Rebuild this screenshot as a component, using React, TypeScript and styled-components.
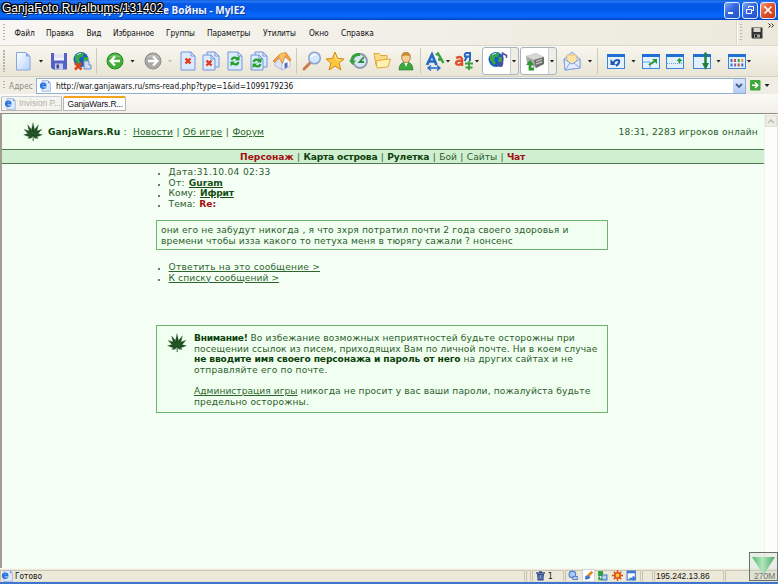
import React from 'react';
import styled, { createGlobalStyle, css } from 'styled-components';

const Global = createGlobalStyle`
  html, body, #root { margin: 0; padding: 0; height: 100%; overflow: hidden; }
  body { width: 778px; height: 584px; background: #ece9d8; }
  * { box-sizing: border-box; }
  svg { display: block; flex: none; overflow: visible; }
`;

const tahoma = css`
  font-family: 'DejaVu Sans Condensed', 'DejaVu Sans', sans-serif;
  font-size: 8.3px;
  color: #111;
`;

const Window = styled.div`
  position: relative;
  width: 778px;
  height: 584px;
  display: flex;
  flex-direction: column;
  overflow: hidden;
  white-space: nowrap;
`;

/* ---------- title bar ---------- */
const TitleBar = styled.header`
  height: 20px;
  flex: none;
  display: flex;
  align-items: center;
  justify-content: space-between;
  padding-right: 2px;
  background: linear-gradient(#0a50cc 0, #2a7cf8 1px, #0458e4 4px, #0358e8 9px, #0566fb 14px, #0565f8 17px, #0340b8 20px);
`;
const Title = styled.div`
  width: 245px;
  display: flex;
  justify-content: flex-end;
  font: bold 10px/18px 'Open Sans', sans-serif;
  color: #f2f6ff;
  text-shadow: 1px 1px 0 #0a3a9a;
`;
const Stamp = styled.div`
  position: absolute;
  left: 2px;
  top: 1px;
  font: 12px/14px 'Liberation Sans', sans-serif;
  letter-spacing: 0.04px;
  color: #fff;
  text-shadow: -1px -1px 0 #000, 1px -1px 0 #000, -1px 1px 0 #000, 1px 1px 0 #000, 0 -1px 0 #000, 0 1px 0 #000,
    -1px 0 0 #000, 1px 0 0 #000, 0 0 2px #000;
`;
const Controls = styled.div`
  display: flex;
  gap: 2px;
`;
const Control = styled.button<{ $close?: boolean }>`
  width: 16px;
  height: 17px;
  padding: 0;
  display: grid;
  place-items: center;
  border: 1px solid #dfe8fa;
  border-radius: 3px;
  background: ${p =>
    p.$close ? 'linear-gradient(135deg, #f0a080, #e2542c 45%, #c83a10)' : 'linear-gradient(135deg, #7fa8f6, #3468e0 45%, #2450c8)'};
`;

/* ---------- menu ---------- */
const Grip = styled.div`
  width: 2px;
  align-self: stretch;
  margin: 4px 0;
  background: repeating-linear-gradient(#b9b5a6 0 1.5px, transparent 1.5px 3px);
`;
const MenuBar = styled.nav`
  ${tahoma}
  height: 26px;
  flex: none;
  display: flex;
  align-items: stretch;
  padding-left: 3px;
  background: linear-gradient(90deg, #f7f6f2, #ece9dc);
  border-bottom: 1px solid #dcd9cc;
`;
const MenuItems = styled.div`
  flex: 1;
  display: flex;
  align-items: center;
  gap: 12px;
  padding: 1px 0 0 9.5px;
`;
const MenuItem = styled.span<{ $w: number; $ls?: number }>`
  width: ${p => p.$w}px;
  letter-spacing: ${p => p.$ls ?? -0.1}px;
`;
const MenuExtra = styled.div`
  width: 41px;
  display: flex;
  align-items: center;
  border-left: 1px solid #fff;
  box-shadow: -1px 0 0 #dad7c8;
  padding-left: 2px;
`;
const ExtraIcon = styled.div`
  margin: 1px 0 0 9px;
`;
const Chevron = styled.div`
  margin: -14px 0 0 5px;
`;

/* ---------- tool bar ---------- */
const ToolBar = styled.div`
  height: 31px;
  flex: none;
  display: flex;
  align-items: center;
  padding-left: 3px;
  background: linear-gradient(#f8f6ef, #efecdf 60%, #e9e5d6);
  border-bottom: 1px solid #d5d1c0;
`;
const Tool = styled.div<{ $m?: number }>`
  width: 20px;
  height: 20px;
  flex: none;
  margin-left: ${p => p.$m ?? 4}px;
`;
const Arrow = styled.i<{ $m?: number; $dim?: boolean }>`
  flex: none;
  width: 5px;
  height: 3px;
  margin: 0 0.5px 0 ${p => (p.$m ?? 5) + 0.5}px;
  background: ${p => (p.$dim ? '#c4c0b4' : '#222')};
  clip-path: polygon(0 0, 100% 0, 50% 100%);
`;
const Sep = styled.i`
  flex: none;
  width: 1px;
  height: 26px;
  margin-left: 4px;
  background: #cdcabc;
`;
const Split = styled.div<{ $m: number }>`
  width: 37px;
  height: 28px;
  flex: none;
  margin-left: ${p => p.$m}px;
  display: flex;
  align-items: center;
  border: 1px solid #a9b4be;
  border-radius: 3px;
  background: linear-gradient(90deg, #fff 0 27px, #c9cdd0 27px 28px, #eeede6 28px);
`;

/* ---------- address ---------- */
const AddressBar = styled.div`
  ${tahoma}
  height: 17px;
  flex: none;
  display: flex;
  align-items: center;
  padding-left: 3px;
  background: #f0eee4;
`;
const Label = styled.span`
  width: 27px;
  margin-left: 4px;
  color: #8f8c80;
  letter-spacing: 0.05px;
`;
const Field = styled.div`
  width: 710px;
  height: 16px;
  display: flex;
  align-items: center;
  padding-left: 2px;
  border: 1px solid #8fb0cd;
  background: #fff;
`;
const Url = styled.span`
  flex: 1;
  margin-left: 5px;
  letter-spacing: -0.02px;
`;
const Drop = styled.div`
  width: 12px;
  height: 14px;
  display: grid;
  place-items: center;
  background: linear-gradient(#dbe6fd, #b6cbf6);
`;
const Go = styled.div`
  margin-left: 4px;
`;

/* ---------- tabs ---------- */
const TabBar = styled.div`
  height: 19px;
  flex: none;
  display: flex;
  padding: 2px 0 1px 1px;
  background: linear-gradient(#fbfaf7, #f1efe7);
`;
const Tab = styled.div<{ $active?: boolean }>`
  display: flex;
  align-items: center;
  width: ${p => (p.$active ? 63 : 61)}px;
  height: 15px;
  margin-right: 1px;
  padding-left: ${p => (p.$active ? 3.5 : 2)}px;
  gap: 3px;
  border: 1px solid #b4b8b4;
  border-top: ${p => (p.$active ? '2px solid #f2a21c' : '1px solid #c9cfd6')};
  border-radius: 2px 2px 0 0;
  background: ${p => (p.$active ? '#fff' : '#f4f3ee')};
  color: ${p => (p.$active ? '#111' : '#b3b1a8')};
  font: 8.4px/11px 'Liberation Sans', sans-serif;
  letter-spacing: ${p => (p.$active ? -0.1 : -0.02)}px;
`;

/* ---------- page ---------- */
const Viewport = styled.div`
  flex: 1;
  display: flex;
  border-top: 1px solid #8f8a80;
  border-left: 2px solid #a19b90;
  border-right: 1px solid #e4e2d8;
  background: #f5fff5;
`;
const Page = styled.main`
  width: 762px;
  font: 9.12px/10.64px 'DejaVu Sans', Verdana, sans-serif;
  color: #2d5c2d;
`;
const Scroll = styled.div`
  flex: 1;
  background: #fdfefc;
  border-left: 1px solid #f0f2ec;
`;
const ScrollButton = styled.div`
  height: 12px;
  margin: 1px 0 0;
  display: grid;
  place-items: center;
  background: #efeee6;
  border: 1px solid #e0dfd6;
`;
const Run = styled.span<{ $ls?: number }>`
  letter-spacing: ${p => p.$ls ?? 0}px;
`;
const Strong = styled.b<{ $ls?: number; $red?: boolean }>`
  letter-spacing: ${p => p.$ls ?? 0}px;
  color: ${p => (p.$red ? '#a01010' : '#0c400c')};
`;
const Link = styled.a<{ $ls?: number; $bold?: boolean }>`
  letter-spacing: ${p => p.$ls ?? 0}px;
  font-weight: ${p => (p.$bold ? 'bold' : 'normal')};
  color: ${p => (p.$bold ? '#145014' : '#2d662d')};
  text-decoration: underline;
  text-decoration-thickness: 1px;
  text-underline-offset: 1px;
`;
const SiteHead = styled.div`
  height: 35px;
  display: flex;
  align-items: center;
  padding: 1px 6px 0 21px;
  background: #f0fff0;
`;
const Brand = styled.div`
  flex: 1;
  display: flex;
  align-items: center;
`;
const BrandName = styled.div`
  margin: 0 0 0 5px;
  display: flex;
  width: 80px;
  gap: 3.5px;
`;
const HeadLinks = styled.div`
  display: flex;
  gap: 3.5px;
  margin-left: 5px;
`;
const SiteNav = styled.div`
  height: 15px;
  display: flex;
  justify-content: center;
  align-items: center;
  gap: 3.4px;
  background: #d0eed0;
  border-top: 1px solid #4c7c4c;
  border-bottom: 1px solid #4c7c4c;
  padding: 1px 1px 0 0;
`;
const Column = styled.div`
  width: 452px;
  margin-left: 154px;
  padding-top: 3px;
`;
const List = styled.ul`
  margin: 0;
  padding: 0;
  list-style: none;
`;
const Item = styled.li`
  height: 10.64px;
  display: flex;
  align-items: center;
  gap: 4px;
  &::before {
    content: '';
    width: 2px;
    height: 2px;
    margin: 4px 5px 0 1.6px;
    border-radius: 1px;
    background: #2d5c2d;
  }
`;
const Box = styled.section`
  border: 1px solid #6cb56c;
  background: #f0fff0;
`;
const Message = styled(Box)`
  height: 30px;
  margin: 10.4px 0 12px;
  padding: 4px 4px;
`;
const Warning = styled(Box)`
  height: 88px;
  margin-top: 42px;
  padding: 7px 0 0 10px;
  display: flex;
  gap: 7px;
`;
const Line = styled.div`
  height: 10.64px;
`;

/* ---------- status bar ---------- */
const StatusBar = styled.footer`
  ${tahoma}
  height: 16px;
  flex: none;
  display: flex;
  align-items: center;
  background: #ece9d8;
  border-top: 1px solid #f8f7f0;
  border-bottom: 2px solid #3f74cf;
`;
const Cell = styled.div<{ $w: number; $pad?: number; $gap?: number }>`
  width: ${p => p.$w}px;
  height: 12px;
  flex: none;
  display: flex;
  align-items: center;
  gap: ${p => p.$gap ?? 2}px;
  padding-left: ${p => p.$pad ?? 2}px;
  border: 1px solid #cbc7b6;
  border-left-color: #c5c1b0;
  border-bottom-color: #e3dfcf;
  margin-right: 1px;
`;
const Address = styled.span`
  font: 8.4px/10px 'Liberation Sans', sans-serif;
`;
const Memory = styled.span`
  font: 8.8px/10px 'Liberation Sans', sans-serif;
  letter-spacing: -0.25px;
  color: #333;
`;
const Counter = styled.div`
  position: absolute;
  left: 749px;
  top: 552px;
  width: 29px;
  height: 29px;
  border: 1px solid #6a6f68;
  background: rgba(205, 215, 203, 0.4);
`;

/* ---------- drawings ---------- */
const Leaf = ({ s }: { s: number }) => (
  <svg width={s} height={s} viewBox="-10 -10 20 20">
    <g fill="#1f4f22" stroke="#1f4f22" strokeWidth=".2">
      {[[0, 13], [-27, 12], [27, 12], [-55, 11], [55, 11], [-85, 9.5], [85, 9.5], [-120, 6], [120, 6]].map(([a, l]) => (
        <path key={a} transform={`translate(0 3.500) rotate(${a})`} d={`M0 .8 L-.5 -1 L-1.5 ${-l * 0.5} L-.8 ${-l * 0.72} L0 ${-l} L.8 ${-l * 0.72} L1.500 ${-l * 0.5} L.5 -1Z`} />
      ))}
      <path d="M-.4 3h.8L.5 9h-.6Z" />
    </g>
  </svg>
);
const Sheet = ({ x = 3, y = 1, w = 14, h = 18 }) => (
  <path d={`M${x} ${y}H${x + w - 4}L${x + w} ${y + 4}V${y + h}H${x}Z M${x + w - 4} ${y}v4h4`} fill="#dceafd" stroke="#7495dc" />
);
const Ic = ({ children, s = 20 }: { children: React.ReactNode; s?: number }) => (
  <svg width={s} height={s} viewBox="0 0 20 20">{children}</svg>
);
const Globe = () => (
  <g>
    <circle cx="9" cy="8.500" r="7.500" fill="#1b5cc0" />
    <path d="M3 5Q7 0 12 2L11 6L8 6L7 9L9 12L7 14L3 9ZM12 6L16 6Q17 10 14 13L11 10Z" fill="#36a844" />
    <path d="M5 4Q7 2 9 2.500" stroke="#b9e2ff" fill="none" />
  </g>
);
const Cross = ({ x = 10, y = 10 }) => (
  <path d={`M${x - 2.5} ${y - 2.5}l5 5m0-5l-5 5`} stroke="#e03a16" strokeWidth="2.400" />
);
const Cycle = ({ x = 10 }) => (
  <g fill="none" stroke="#25a02c" strokeWidth="2.200">
    <path d={`M${x - 3.5} 9Q${x - 2} 5 ${x + 2.5} 7.500M${x + 3.5} 11Q${x + 2} 15 ${x - 2.5} 12.500`} />
    <path d={`M${x} 9.500h4.500v-5ZM${x} 10.500h-4.500v5Z`} fill="#25a02c" stroke="none" />
  </g>
);
const Frame = () => (
  <g>
    <rect x="1.500" y="3.500" width="17" height="14" fill="#e4f1fd" stroke="#3d85d8" />
    <rect x="1" y="3" width="18" height="3" fill="#1f6fd4" />
  </g>
);
const NewDoc = () => (
  <Ic>
    <defs>
      <linearGradient id="sheet" x2="1" y2="1">
        <stop stopColor="#fff" />
        <stop offset="1" stopColor="#b5d2fa" />
      </linearGradient>
    </defs>
    <path d="M3.500 1.500H13L17 5.500V19H3.500Z" fill="url(#sheet)" stroke="#86a5e0" />
    <path d="M13 1.500v4h4Z" fill="#7ea5ea" />
  </Ic>
);
const Save = () => (
  <Ic>
    <path d="M2 2H18V18.500H4L2 16.500Z" fill="#5462c4" />
    <path d="M5 2h10v7.500H5Z" fill="#f1f2fa" />
    <path d="M5 4h10M5 6h10" stroke="#c6cae6" strokeWidth=".7" />
    <path d="M6 12.500h8v6H6Z" fill="#c9cdec" />
    <path d="M7.500 13.500h2.500v4H7.500Z" fill="#3a4596" />
  </Ic>
);
const GlobeOff = () => (
  <Ic>
    <Globe />
    <path d="M12 10h5v4h2v4h-7v-3Z" fill="#cdddf6" stroke="#6f8dc4" />
    <path d="M3 12l6.500 6.500m0-6.500l-6.500 6.500" stroke="#e0401a" strokeWidth="2.500" />
  </Ic>
);
const Round = ({ fill, edge, flip }: { fill: string; edge: string; flip?: boolean }) => (
  <Ic>
    <circle cx="10" cy="10" r="8" fill={fill} stroke={edge} />
    <path d="M3 7Q10 0 17 7Q10 5 3 7Z" fill="#fff" opacity=".3" />
    <path transform={flip ? 'translate(20 0) scale(-1 1)' : undefined} d="M15 10H6M10 5.500L5.500 10L10 14.500" fill="none" stroke="#fff" strokeWidth="2.300" />
  </Ic>
);
const Stop = () => <Ic><Sheet /><Cross /></Ic>;
const StopAll = () => <Ic><Sheet x={6} y={1} w={12} h={15} /><Sheet x={2} y={4} w={12} h={15} /><Cross x={8} y={12} /></Ic>;
const Refresh = () => <Ic><Sheet /><Cycle /></Ic>;
const RefreshAll = () => <Ic><Sheet x={6} y={1} w={12} h={15} /><Sheet x={2} y={4} w={12} h={15} /><g transform="translate(0 2)"><Cycle x={8} /></g></Ic>;
const Home = () => (
  <Ic>
    <path d="M3 10L7 6L11 11V19L3 15Z" fill="#dfe3f6" stroke="#a2a8d4" strokeWidth=".7" />
    <path d="M10 12L13 6L18 9V15.500L10 19Z" fill="#f8f8fd" stroke="#a2a8d4" strokeWidth=".7" />
    <path d="M12.500 12.500l3-1.200v5l-3 1.300Z" fill="#4c6ec0" />
    <path d="M1 10L8 3L14 1.500L19 9L17.500 10L13 5L10.500 12.500L7.500 7L2.500 11.500Z" fill="#f3a640" stroke="#cf7620" strokeWidth=".7" />
    <path d="M8 3L13.500 2L13 5L10.500 11L7.500 6.500Z" fill="#f9c064" />
  </Ic>
);
const Search = () => (
  <Ic>
    <path d="M2 18L8 12" stroke="#c97b4a" strokeWidth="3" strokeLinecap="round" />
    <circle cx="12.500" cy="7" r="5.800" fill="#d3e9fd" stroke="#8fa3cf" strokeWidth="1.500" />
    <path d="M9 6Q11 3 14 4" stroke="#fff" strokeWidth="1.500" fill="none" />
  </Ic>
);
const Star = () => (
  <Ic>
    <path d="M10 1L12.600 7.300L19 8L14 12L16 19L10 15L4 19L6 12L1 8L7.400 7.300Z" fill="#fcc83c" stroke="#d98a1c" />
    <path d="M10 4L11.500 8.500L15 9" stroke="#fff0a8" fill="none" />
  </Ic>
);
const History = () => (
  <Ic>
    <circle cx="11" cy="10" r="7" fill="#d8e6f2" stroke="#8c99ae" strokeWidth="1.800" />
    <path d="M2.500 10Q3.500 3 11 3.500" fill="none" stroke="#35a03c" strokeWidth="3" />
    <path d="M0 9.500H7L3.500 14Z" fill="#35a03c" />
    <path d="M15 6L10.500 11H15" fill="none" stroke="#2c8b38" strokeWidth="1.800" />
  </Ic>
);
const Folder = () => (
  <Ic>
    <path d="M2 2.500h5l1.500 2H15v8L4 14Z" fill="#fbdc84" stroke="#e0a83c" />
    <path d="M5 17L4 10L12 8.500L18.500 8L16 16Z" fill="#fff0b0" stroke="#e0a83c" />
  </Ic>
);
const Person = () => (
  <Ic>
    <path d="M3 19Q3 11 10 11Q17 11 17 19Z" fill="#3aa83c" stroke="#1f7a2a" strokeWidth=".6" />
    <path d="M8 11h4l-2 5Z" fill="#fff" />
    <ellipse cx="10" cy="6.500" rx="4.300" ry="5" fill="#f6cf98" stroke="#b97a3c" />
    <path d="M5.500 5.500Q5.500 1 10 1Q14.500 1 14.500 5.500Q10 3.500 5.500 5.500Z" fill="#c98a38" />
  </Ic>
);
const Fonts = () => (
  <Ic>
    <path d="M11 4L13 2.500L18.500 12M13 8.500h4" stroke="#36a044" strokeWidth="2.400" fill="none" />
    <path d="M2 14L7 3.500L11.500 14M4 10.500h6" stroke="#2468c8" strokeWidth="2.700" fill="none" />
    <path d="M3 17h12M6 14.500L3 17L6 19.500M12 14.500L15 17L12 19.500" stroke="#2468c8" strokeWidth="1.300" fill="none" />
  </Ic>
);
const Translate = () => (
  <Ic>
    <path d="M2 7Q8 4.500 8 8.500V15M8 10Q2 9 2 12.500Q4.500 15.500 8 12" stroke="#e0502c" strokeWidth="2.400" fill="none" />
    <path d="M16 10V2H13Q10 2 11 5.500H16M13 6L10.500 10" stroke="#2468c8" strokeWidth="2" fill="none" />
    <path d="M11 12.500h8M15 10v9M11.500 16.500h7" stroke="#36a044" strokeWidth="1.900" />
  </Ic>
);
const GlobeNote = () => (
  <Ic>
    <Globe />
    <path d="M15.500 13V2L19.500 4.500V7" stroke="#4a4e96" strokeWidth="1.500" fill="none" />
    <circle cx="13.500" cy="13.500" r="2.500" fill="#4a4e96" />
  </Ic>
);
const Proxy = () => (
  <Ic>
    <path d="M1 5L11 2L19 6V13L11 17L2 12Z" fill="#a6a8a6" />
    <path d="M1 5L11 2L19 6L9 9Z" fill="#d6d8d6" />
    <path d="M9 9L19 6V13L11 17Z" fill="#6d706d" />
    <path d="M11 10.500l6-2M11 13l6-2" stroke="#ddd" />
    <path d="M9 18H5V12" stroke="#2a9a30" strokeWidth="2.800" fill="none" />
    <path d="M1 14L5 9L9 14Z" fill="#2a9a30" />
  </Ic>
);
const Mail = () => (
  <Ic>
    <path d="M2 8L10 1L18 8V17L3 19Z" fill="#cfe0f8" stroke="#84a3dc" />
    <path d="M5 4h9l1 6l-5 3L5 10Z" fill="#fde4a4" stroke="#e8b860" strokeWidth=".8" />
    <path d="M2 8L10 13L18 8V17L3 19Z" fill="#e1ecfc" stroke="#84a3dc" />
    <path d="M3 19L8 12M18 17L12 12" stroke="#84a3dc" />
  </Ic>
);
const Undo = () => <Ic><Frame /><path d="M7 12Q10 8 13 9.500Q14 12 10 15" fill="none" stroke="#1c55b4" strokeWidth="2" /><path d="M4.500 8V14H10Z" fill="#1c55b4" /></Ic>;
const Expand = () => <Ic><Frame /><path d="M2 11h7v6" fill="none" stroke="#66a4e4" /><path d="M8 14L14 10" stroke="#249a34" strokeWidth="2" /><path d="M11 8h5v5Z" fill="#249a34" /></Ic>;
const Up = () => <Ic><Frame /><path d="M2 12.500h16" stroke="#66a4e4" strokeDasharray="1 1" /><path d="M14.500 12V9" stroke="#249a34" strokeWidth="2" /><path d="M11.500 10L14.500 7L17.500 10Z" fill="#249a34" /></Ic>;
const Down = () => <Ic><Frame /><path d="M13.500 1.500V14" stroke="#23803a" strokeWidth="2.500" /><path d="M10 12h7L13.500 19Z" fill="#23803a" /></Ic>;
const Palette = () => (
  <Ic>
    <Frame />
    {['#3f6fd0', '#d04a2c', '#3aa04a', '#e09a2c', '#3f6fd0', '#8a5ab0', '#d04a2c', '#3f6fd0'].map((c, i) => (
      <rect key={i} x={3.5 + (i % 4) * 3.6} y={8 + Math.floor(i / 4) * 4.5} width="2" height="3" fill={c} />
    ))}
  </Ic>
);
const PageIcon = () => (
  <Ic s={12}>
    <path d="M5 1H15L19 5V19H5Z" fill="#dce8fb" stroke="#9ab2e0" strokeWidth="1.300" />
    <path d="M15 1v4h4Z" fill="#6f98e0" />
    <circle cx="7" cy="9.500" r="5.500" fill="#2a74dc" />
    <path d="M5.500 8.500Q7 6.500 9 8.500Z" fill="#fff" />
    <path d="M6 11.500H13" stroke="#dce8fb" strokeWidth="1.500" />
  </Ic>
);

export default function App() {
  return (
    <Window>
      <Global />
      <TitleBar>
        <Title>GanjaWars.Ru :: Ганджубасовые Войны - MyIE2</Title>
        <Controls>
          <Control><svg width="10" height="10"><path d="M1 8h5" stroke="#fff" strokeWidth="2" /></svg></Control>
          <Control><svg width="10" height="10"><path d="M3.500 3V1.500h5v4H7M1.500 4.500h5v4h-5Z" stroke="#fff" fill="none" /></svg></Control>
          <Control $close><svg width="10" height="10"><path d="M1.500 1.500l7 7m0-7l-7 7" stroke="#fff" strokeWidth="1.700" /></svg></Control>
        </Controls>
      </TitleBar>
      <Stamp>GanjaFoto.Ru/albums/131402</Stamp>

      <MenuBar>
        <Grip />
        <MenuItems>
          <MenuItem $w={19.5}>Файл</MenuItem>
          <MenuItem $w={28.5}>Правка</MenuItem>
          <MenuItem $w={14.5}>Вид</MenuItem>
          <MenuItem $w={41} $ls={-0.15}>Избранное</MenuItem>
          <MenuItem $w={29}>Группы</MenuItem>
          <MenuItem $w={44} $ls={-0.15}>Параметры</MenuItem>
          <MenuItem $w={34}>Утилиты</MenuItem>
          <MenuItem $w={20}>Окно</MenuItem>
          <MenuItem $w={34} $ls={0}>Справка</MenuItem>
        </MenuItems>
        <MenuExtra>
          <Grip />
          <ExtraIcon>
            <svg width="12" height="12"><path d="M.5.500h11v11h-10l-1-1Z" fill="#333" /><path d="M2.500 1h7v4h-7Z" fill="#d8d8d0" /><path d="M3 7.500h6v3H3Z" fill="#aaa" /><path d="M4 8h2v2H4Z" fill="#222" /></svg>
          </ExtraIcon>
          <Chevron>
            <svg width="7" height="5"><path d="M.5.500l2 2l-2 2M3.500.500l2 2l-2 2" stroke="#222" fill="none" /></svg>
          </Chevron>
        </MenuExtra>
      </MenuBar>

      <ToolBar>
        <Grip />
        <Tool $m={8}><NewDoc /></Tool>
        <Arrow />
        <Tool $m={5}><Save /></Tool>
        <Tool $m={3}><GlobeOff /></Tool>
        <Sep />
        <Tool $m={7.5}><Round fill="#3fae34" edge="#2c8c26" /></Tool>
        <Arrow />
        <Tool $m={7}><Round fill="#aaa9a6" edge="#8e8d8a" flip /></Tool>
        <Arrow $m={4.5} $dim />
        <Tool $m={5}><Stop /></Tool>
        <Tool $m={3}><StopAll /></Tool>
        <Tool><Refresh /></Tool>
        <Tool><RefreshAll /></Tool>
        <Tool $m={3}><Home /></Tool>
        <Sep />
        <Tool $m={4.5}><Search /></Tool>
        <Tool $m={3.5}><Star /></Tool>
        <Tool><History /></Tool>
        <Tool $m={3}><Folder /></Tool>
        <Tool><Person /></Tool>
        <Sep />
        <Tool><Fonts /></Tool>
        <Arrow $m={0} />
        <Tool $m={3}><Translate /></Tool>
        <Arrow $m={0} />
        <Split $m={2}><Tool><GlobeNote /></Tool><Arrow $m={4} /></Split>
        <Split $m={1}><Tool><Proxy /></Tool><Arrow $m={4} /></Split>
        <Tool $m={5}><Mail /></Tool>
        <Arrow />
        <Sep />
        <Tool $m={8}><Undo /></Tool>
        <Arrow $m={4.5} />
        <Tool><Expand /></Tool>
        <Tool><Up /></Tool>
        <Tool $m={7}><Down /></Tool>
        <Arrow $m={4} />
        <Tool $m={5}><Palette /></Tool>
        <Arrow $m={-0.5} />
      </ToolBar>

      <AddressBar>
        <Grip />
        <Label>Адрес</Label>
        <Field>
          <PageIcon />
          <Url>http://war.ganjawars.ru/sms-read.php?type=1&amp;id=1099179236</Url>
          <Drop><svg width="8" height="6"><path d="M1 1l3 3l3-3" stroke="#44608c" strokeWidth="1.800" fill="none" /></svg></Drop>
        </Field>
        <Go><svg width="11" height="11"><rect width="10.500" height="10.500" rx="1" fill="#3fa63a" /><path d="M2 5.200h5M5 2.500l2.800 2.700L5 8" stroke="#fff" strokeWidth="1.600" fill="none" /></svg></Go>
        <Arrow $m={3} />
      </AddressBar>

      <TabBar>
        <Tab><PageIcon />Invision P...</Tab>
        <Tab $active>GanjaWars.R...</Tab>
      </TabBar>

      <Viewport>
        <Page>
          <SiteHead>
            <Brand>
              <Leaf s={20} />
              <BrandName><Strong>GanjaWars.Ru</Strong><Run>:</Run></BrandName>
              <HeadLinks>
                <Link $ls={0.05}>Новости</Link><Run>|</Run><Link $ls={0.22}>Об игре</Link><Run>|</Run><Link>Форум</Link>
              </HeadLinks>
            </Brand>
            <Run $ls={0.2}>18:31, 2283 игроков онлайн</Run>
          </SiteHead>
          <SiteNav>
            <Strong $red>Персонаж</Strong><Run>|</Run><Strong $ls={-0.18}>Карта острова</Strong><Run>|</Run>
            <Strong $ls={-0.15}>Рулетка</Strong><Run>|</Run><Run>Бой</Run><Run>|</Run><Run>Сайты</Run><Run>|</Run>
            <Strong $red $ls={-0.3}>Чат</Strong>
          </SiteNav>
          <Column>
            <List>
              <Item><Run $ls={0.3}>Дата:31.10.04 02:33</Run></Item>
              <Item><Run $ls={0.2}>От:</Run><Link $bold>Guram</Link></Item>
              <Item><Run>Кому:</Run><Link $bold $ls={-0.2}>Ифрит</Link></Item>
              <Item><Run>Тема:</Run><Strong $red>Re:</Strong></Item>
            </List>
            <Message>
              <Line><Run $ls={0.144}>они его не забудут никогда , я что зхря потратил почти 2 года своего здоровья и</Run></Line>
              <Line><Run $ls={0.128}>времени чтобы изза какого то петуха меня в тюрягу сажали ? нонсенс</Run></Line>
            </Message>
            <List>
              <Item><Link $ls={0.225}>Ответить на это сообщение &gt;</Link></Item>
              <Item><Link $ls={0.059}>К списку сообщений &gt;</Link></Item>
            </List>
            <Warning>
              <Leaf s={20} />
              <div>
                <Line><Strong $ls={-0.3}>Внимание!</Strong> <Run $ls={0.145}>Во избежание возможных неприятностей будьте осторожны при</Run></Line>
                <Line><Run $ls={0.096}>посещении ссылок из писем, приходящих Вам по личной почте. Ни в коем случае</Run></Line>
                <Line><Strong $ls={-0.125}>не вводите имя своего персонажа и пароль от него</Strong> <Run $ls={0.121}>на других сайтах и не</Run></Line>
                <Line><Run $ls={0.196}>отправляйте его по почте.</Run></Line>
                <Line />
                <Line><Link $ls={0.024}>Администрация игры</Link> <Run $ls={0.113}>никогда не просит у вас ваши пароли, пожалуйста будьте</Run></Line>
                <Line><Run $ls={0.153}>предельно осторожны.</Run></Line>
              </div>
            </Warning>
          </Column>
        </Page>
        <Scroll>
          <ScrollButton><svg width="8" height="5"><path d="M1 4l3-3l3 3" stroke="#bdbcb4" strokeWidth="1.500" fill="none" /></svg></ScrollButton>
        </Scroll>
      </Viewport>

      <StatusBar>
        <Cell $w={525} $pad={0}><PageIcon /><span>Готово</span></Cell>
        <Cell $w={5} $pad={0} />
        <Cell $w={32} $pad={3} $gap={3}>
          <svg width="9" height="10"><path d="M1 3h7L7.500 9.500h-6Z" fill="#34508c" /><path d="M0 2h9M3 .8h3" stroke="#34508c" strokeWidth="1.300" /><path d="M3 4v4M4.500 4v4M6 4v4" stroke="#aebcdc" strokeWidth=".6" /></svg>
          <span>1</span>
        </Cell>
        <Cell $w={76} $gap={3.5}>
          <Ic s={11}><circle cx="8" cy="8" r="6" fill="#a9c8f4" stroke="#4c7cd0" strokeWidth="2" /><path d="M9 12h8v5H9Z" fill="#dce8fc" stroke="#5c86d0" strokeWidth="2" /></Ic>
          <Ic s={11}><path d="M-1 -1h22v22H-1Z" fill="#fff" stroke="#a9b8cc" /><path d="M4 17Q2 10 9 9L14 13Q10 18 4 17Z" fill="#3c74d0" /><path d="M9 11L17 3" stroke="#e08a24" strokeWidth="5" /></Ic>
          <Ic s={11}><path d="M2 2h9v9H2Z" fill="#2ea03a" /><path d="M9 9h9v9H9Z" fill="#bcd4f4" stroke="#4c7cc0" strokeWidth="2" /><path d="M4 12v5h5" fill="none" stroke="#2ea03a" strokeWidth="3" /></Ic>
          <Ic s={11}><circle cx="10" cy="10" r="5" fill="#fcd040" stroke="#e04a18" strokeWidth="3" /><path d="M10 0v4M10 16v4M0 10h4M16 10h4M3 3l3 3M14 14l3 3M17 3l-3 3M6 14l-3 3" stroke="#e04a18" strokeWidth="2.500" /></Ic>
          <Ic s={11}><path d="M2 2h15v16H2Z" fill="#fff" stroke="#3c78d0" strokeWidth="2" /><path d="M2 4h15" stroke="#3c78d0" strokeWidth="4" /><path d="M6 14h6v-4l7 5l-7 5v-3H6Z" fill="#3c78d0" /></Ic>
        </Cell>
        <Cell $w={11} />
        <Cell $w={70} $pad={1}><Address>195.242.13.86</Address></Cell>
        <Cell $w={60} $pad={28}><Memory>270M</Memory></Cell>
      </StatusBar>
      <Counter>
        <svg width="27" height="27">
          <defs>
            <linearGradient id="drop" x2="1">
              <stop stopColor="#3fae62" />
              <stop offset=".45" stopColor="#a8e6b4" />
              <stop offset="1" stopColor="#3c9a58" />
            </linearGradient>
          </defs>
          <path d="M2 4H25L13.500 22Z" fill="url(#drop)" opacity=".85" />
        </svg>
      </Counter>
    </Window>
  );
}
